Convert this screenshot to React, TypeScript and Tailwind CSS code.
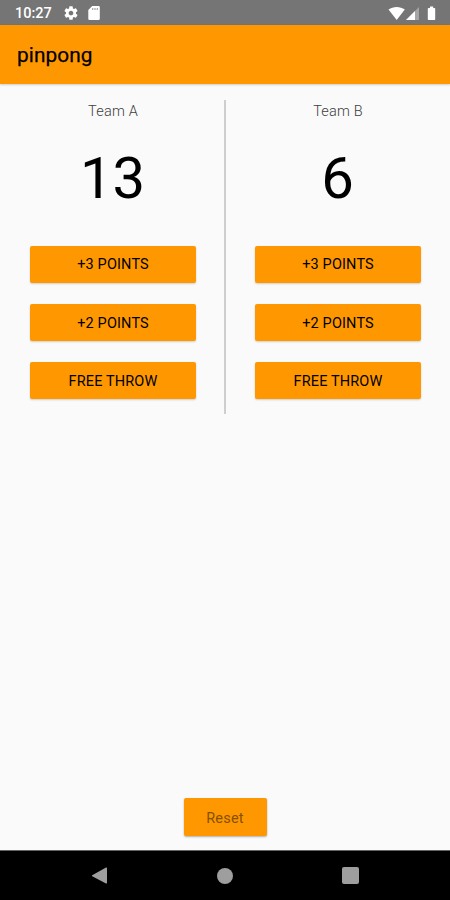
import React, { useState } from 'react';

const actions = [
  { label: '+3 POINTS', points: 3 },
  { label: '+2 POINTS', points: 2 },
  { label: 'FREE THROW', points: 1 },
];

const StatusBar: React.FC = () => (
  <div className="flex h-[25px] shrink-0 items-center bg-[#757575] pl-[15px] pr-[13px] pt-px text-white">
    <span className="w-[37px] whitespace-nowrap pt-[2px] text-[14.5px] font-medium leading-none">10:27</span>
    {/* Settings */}
    <svg className="ml-[11px] h-[16px] w-[16px]" viewBox="0 0 24 24" fill="currentColor">
      <path d="M19.43 12.98c.04-.32.07-.64.07-.98s-.03-.66-.07-.98l2.11-1.65c.19-.15.24-.42.12-.64l-2-3.46c-.12-.22-.39-.3-.61-.22l-2.49 1c-.52-.4-1.08-.73-1.69-.98l-.38-2.65C14.46 2.18 14.25 2 14 2h-4c-.25 0-.46.18-.49.42l-.38 2.65c-.61.25-1.17.59-1.69.98l-2.49-1c-.23-.09-.49 0-.61.22l-2 3.46c-.13.22-.07.49.12.64l2.11 1.65c-.04.32-.07.65-.07.98s.03.66.07.98l-2.11 1.65c-.19.15-.24.42-.12.64l2 3.46c.12.22.39.3.61.22l2.49-1c.52.4 1.08.73 1.69.98l.38 2.65c.03.24.24.42.49.42h4c.25 0 .46-.18.49-.42l.38-2.65c.61-.25 1.17-.59 1.69-.98l2.49 1c.23.09.49 0 .61-.22l2-3.46c.12-.22.07-.49-.12-.64l-2.11-1.65zM12 15.5c-1.93 0-3.5-1.57-3.5-3.5s1.57-3.5 3.5-3.5 3.5 1.57 3.5 3.5-1.57 3.5-3.5 3.5z" />
    </svg>
    {/* SD card */}
    <svg className="ml-[9px] h-[14px] w-[12px]" viewBox="0 0 12 14" fill="currentColor">
      <path
        fillRule="evenodd"
        d="M4.2 0H10.6A1.2 1.2 0 0 1 11.8 1.2V12.8A1.2 1.2 0 0 1 10.6 14H1.5A1.2 1.2 0 0 1 .3 12.8V4ZM4.4 2V4H5.2V2ZM6.6 2V4H7.4V2ZM8.8 2V4H9.6V2Z"
      />
    </svg>
    {/* Wifi, signal, battery */}
    <svg className="ml-auto h-[15px] w-[49px]" viewBox="0 0 49 15" fill="currentColor">
      <path d="M0.5 3.6C5.2 0.1 12.2 0.1 16.8 3.6L8.7 14Z" />
      <path d="M31 1V14H18Z" opacity="0.35" />
      <path d="M27 5V14H18Z" />
      <path d="M42 .6h3.2v1.4h1.2a.8.8 0 0 1 .8.8V13.3a.8.8 0 0 1-.8.8h-5.8a.8.8 0 0 1-.8-.8V2.8a.8.8 0 0 1 .8-.8H42Z" />
    </svg>
  </div>
);

interface TeamProps {
  name: string;
  score: number;
  onScore: (points: number) => void;
}

const Team: React.FC<TeamProps> = ({ name, score, onScore }) => (
  <section className="flex flex-1 flex-col items-center px-[29.5px]">
    <h2 className="mt-[3px] pl-px text-[14.5px] font-light leading-[18px] tracking-[0.2px] text-[#404040]">{name}</h2>
    <div className="mt-[22px] text-[58px] font-normal leading-[70px] text-black">{score}</div>
    <div className="mt-[32.5px] flex w-full flex-col gap-[21px]">
      {actions.map((action) => (
        <button
          key={action.label}
          className="h-[37.3px] w-full rounded-[2px] bg-[#ff9800] pl-px pt-[2px] text-[14.5px] tracking-[0.15px] text-black shadow-[0_1px_2px_rgba(0,0,0,0.18)]"
          onClick={() => onScore(action.points)}
        >
          {action.label}
        </button>
      ))}
    </div>
  </section>
);

const App: React.FC = () => {
  const [teamA, setTeamA] = useState(13);
  const [teamB, setTeamB] = useState(6);

  const reset = () => {
    setTeamA(0);
    setTeamB(0);
  };

  return (
    <div className="flex h-[900px] w-[450px] flex-col overflow-hidden bg-[#fafafa] font-['Roboto',sans-serif]">
      <StatusBar />
      <header className="flex h-[58.5px] shrink-0 items-center bg-[#ff9800] pl-[17px] pt-[3px] text-[20.8px] font-normal tracking-[0.1px] text-black shadow-[0_1px_2px_rgba(0,0,0,0.18)] [-webkit-text-stroke:0.25px_black]">
        pinpong
      </header>

      <main className="flex flex-1 flex-col items-center pt-[16.5px]">
        <div className="flex h-[314px] w-full">
          <Team name="Team A" score={teamA} onScore={(points) => setTeamA(teamA + points)} />
          <div className="-mx-px w-[2px] bg-[#cecece]" />
          <Team name="Team B" score={teamB} onScore={(points) => setTeamB(teamB + points)} />
        </div>
        <button
          className="mb-[14.5px] mt-auto h-[37.5px] w-[83px] rounded-[2px] bg-[#ff9800] pt-[4px] text-[14.5px] tracking-[0.2px] text-[#855000] shadow-[0_1px_2px_rgba(0,0,0,0.3)]"
          onClick={reset}
        >
          Reset
        </button>
      </main>

      {/* Navigation bar */}
      <nav className="flex h-[50px] shrink-0 items-center justify-between border-t border-[#666] bg-black pl-[91px] pr-[91px] text-[#9e9e9e]">
        <svg className="h-[18px] w-[17px]" viewBox="0 0 17 18" fill="currentColor">
          <path d="M1.2 8.3L15 .5Q16 .2 16 1.2V15.8Q16 16.8 15 16.5L1.2 9.3Q.5 8.8 1.2 8.3Z" />
        </svg>
        <div className="h-[16px] w-[16px] rounded-full bg-current" />
        <div className="h-[17px] w-[17px] rounded-[2px] bg-current" />
      </nav>
    </div>
  );
};

export default App;
